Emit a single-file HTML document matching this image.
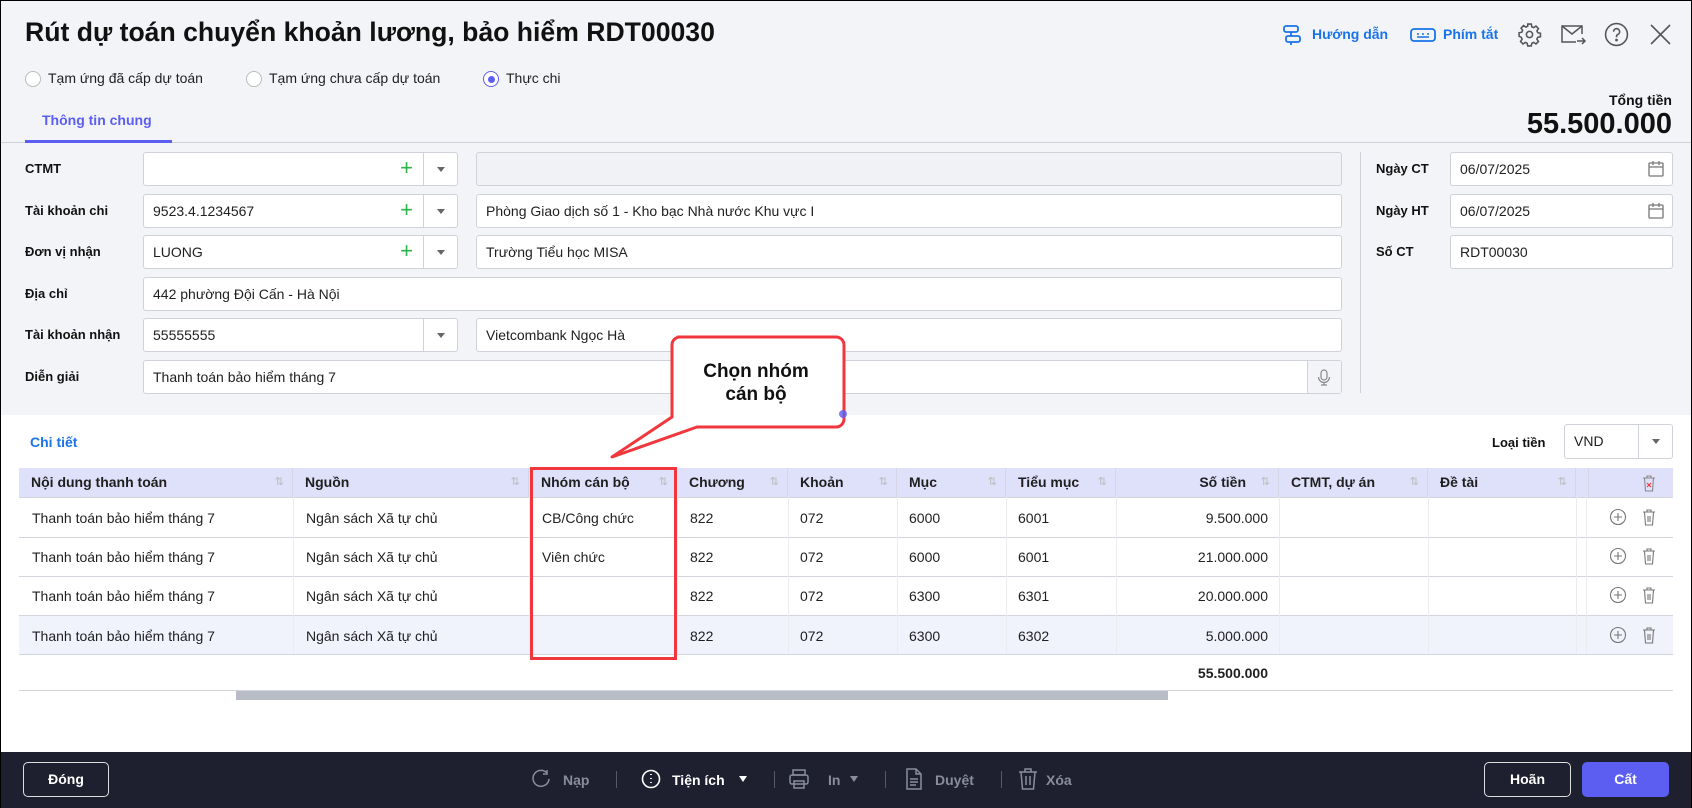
<!DOCTYPE html>
<html><head><meta charset="utf-8"><style>
*{box-sizing:border-box;margin:0;padding:0}
body{width:1692px;height:808px;position:relative;overflow:hidden;background:#fff;font-family:"Liberation Sans",Arial,sans-serif;color:#1f1f1f;font-size:14px}
.a{position:absolute}
.top{left:0;top:0;width:1692px;height:415px;background:#f3f4f8}
.lbl{position:absolute;font-weight:bold;font-size:13px;color:#111}
.inp{position:absolute;height:34px;background:#fff;border:1px solid #cfd2d8;border-radius:3px;padding-left:9px;line-height:32px;font-size:14px}
.dd{position:absolute;top:0;right:0;width:34px;height:32px;border-left:1px solid #cfd2d8}
.dd:after{content:"";position:absolute;left:13px;top:14px;border-left:4px solid transparent;border-right:4px solid transparent;border-top:5px solid #666}
.plus{position:absolute;right:44px;top:0;color:#2cb34a;font-size:22px;line-height:30px}
.th{position:absolute;top:468px;height:29px;line-height:29px;font-weight:bold;font-size:14px;padding-left:12px;border-right:1px solid #d6d6e6}
.sort{position:absolute;right:8px;top:0;color:#bbb;font-size:11px;font-weight:normal}
.td{position:absolute;font-size:14px;line-height:20px}
.hl{position:absolute;left:19px;width:1654px;height:1px;background:#d3d5dc}
.vl{position:absolute;width:1px;background:#ececf0}
.ft{position:absolute;top:752px;left:0;width:1692px;height:56px;background:#1e2030}
.tb{position:absolute;top:771px;line-height:18px;color:#8a8d99;font-size:14px;font-weight:bold}
.sep{position:absolute;top:771px;width:1px;height:17px;background:#555868}
</style></head><body>
<div class="a top"></div>
<div class="a" style="left:0;top:0;width:1692px;height:808px;border:1px solid #000;border-bottom:none;z-index:50;pointer-events:none"></div>

<div class="a" style="left:25px;top:17px;font-size:26.6px;font-weight:bold;color:#111">Rút dự toán chuyển khoản lương, bảo hiểm RDT00030</div>

<!-- header right -->
<svg class="a" style="left:1281px;top:24px" width="22" height="22" viewBox="0 0 22 22" fill="none" stroke="#1a73e8" stroke-width="1.8"><rect x="3" y="2" width="14" height="6" rx="2"/><rect x="5" y="12" width="14" height="6" rx="2"/><path d="M10 8v4"/><path d="M10 18v3"/></svg>
<div class="a" style="left:1312px;top:26px;color:#1a73e8;font-weight:bold;font-size:14px">Hướng dẫn</div>
<svg class="a" style="left:1410px;top:27px" width="26" height="16" viewBox="0 0 26 16" fill="none" stroke="#1a73e8" stroke-width="1.8"><rect x="1" y="2" width="24" height="12" rx="3"/><path d="M7 7h2M12 7h2M17 7h2M7 10h12" stroke-width="1.5"/></svg>
<div class="a" style="left:1443px;top:26px;color:#1a73e8;font-weight:bold;font-size:14px">Phím tắt</div>
<svg class="a" style="left:1517px;top:22px" width="25" height="25" viewBox="0 0 24 24" fill="none" stroke="#555" stroke-width="1.5"><circle cx="12" cy="12" r="3"/><path d="M10.3 2h3.4l.5 2.6 1.8.8 2.2-1.5 2.4 2.4-1.5 2.2.8 1.8 2.6.5v3.4l-2.6.5-.8 1.8 1.5 2.2-2.4 2.4-2.2-1.5-1.8.8-.5 2.6h-3.4l-.5-2.6-1.8-.8-2.2 1.5-2.4-2.4 1.5-2.2-.8-1.8L2 13.7v-3.4l2.6-.5.8-1.8-1.5-2.2 2.4-2.4 2.2 1.5 1.8-.8z"/></svg>
<svg class="a" style="left:1561px;top:23px" width="26" height="24" viewBox="0 0 26 24" fill="none" stroke="#555" stroke-width="1.5"><path d="M21 11V3H1v16h14"/><path d="M1 3l10 8 10-8"/><path d="M16 18h8M21 15l3 3-3 3"/></svg>
<svg class="a" style="left:1604px;top:22px" width="25" height="25" viewBox="0 0 24 24" fill="none" stroke="#555" stroke-width="1.5"><circle cx="12" cy="12" r="10.5"/><path d="M9.2 9.3a2.9 2.9 0 1 1 4 2.7c-.8.4-1.2 1-1.2 1.8v.8"/><circle cx="12" cy="17.3" r=".6" fill="#555"/></svg>
<svg class="a" style="left:1650px;top:24px" width="21" height="21" viewBox="0 0 21 21" stroke="#555" stroke-width="1.6"><path d="M1 1l19 19M20 1L1 20"/></svg>

<!-- radios -->
<div class="a" style="left:25px;top:71px;width:16px;height:16px;border:1px solid #bbb;border-radius:50%;background:#fff"></div>
<div class="a" style="left:48px;top:70px">Tạm ứng đã cấp dự toán</div>
<div class="a" style="left:246px;top:71px;width:16px;height:16px;border:1px solid #bbb;border-radius:50%;background:#fff"></div>
<div class="a" style="left:269px;top:70px">Tạm ứng chưa cấp dự toán</div>
<div class="a" style="left:483px;top:71px;width:16px;height:16px;border:1.5px solid #5b5ef0;border-radius:50%;background:#fff"></div>
<div class="a" style="left:487.5px;top:75.5px;width:7px;height:7px;border-radius:50%;background:#5b5ef0"></div>
<div class="a" style="left:506px;top:70px">Thực chi</div>

<div class="a" style="left:42px;top:112px;color:#5b5ef0;font-weight:bold;font-size:14px">Thông tin chung</div>
<div class="a" style="left:0;top:142px;width:1692px;height:1px;background:#cfd1d8"></div>
<div class="a" style="left:25px;top:140px;width:147px;height:3px;background:#5b5ef0"></div>

<div class="a" style="right:20px;top:92px;font-size:14px;font-weight:bold;color:#111">Tổng tiền</div>
<div class="a" style="right:20px;top:108px;font-size:29px;font-weight:bold;color:#111">55.500.000</div>

<!-- form -->
<div class="lbl" style="left:25px;top:161px">CTMT</div>
<div class="inp" style="left:143px;top:152px;width:315px"><span class="plus">+</span><span class="dd"></span></div>
<div class="inp" style="left:476px;top:152px;width:866px;background:#f1f2f5"></div>

<div class="lbl" style="left:25px;top:203px">Tài khoản chi</div>
<div class="inp" style="left:143px;top:194px;width:315px">9523.4.1234567<span class="plus">+</span><span class="dd"></span></div>
<div class="inp" style="left:476px;top:194px;width:866px">Phòng Giao dịch số 1 - Kho bạc Nhà nước Khu vực I</div>

<div class="lbl" style="left:25px;top:244px">Đơn vị nhận</div>
<div class="inp" style="left:143px;top:235px;width:315px">LUONG<span class="plus">+</span><span class="dd"></span></div>
<div class="inp" style="left:476px;top:235px;width:866px">Trường Tiểu học MISA</div>

<div class="lbl" style="left:25px;top:286px">Địa chỉ</div>
<div class="inp" style="left:143px;top:277px;width:1199px">442 phường Đội Cấn - Hà Nội</div>

<div class="lbl" style="left:25px;top:327px">Tài khoản nhận</div>
<div class="inp" style="left:143px;top:318px;width:315px">55555555<span class="dd"></span></div>
<div class="inp" style="left:476px;top:318px;width:866px">Vietcombank Ngọc Hà</div>

<div class="lbl" style="left:25px;top:369px">Diễn giải</div>
<div class="inp" style="left:143px;top:360px;width:1199px">Thanh toán bảo hiểm tháng 7
<span class="a" style="right:0;top:0;width:34px;height:32px;border-left:1px solid #cfd2d8;background:#f3f4f8"></span>
<svg class="a" style="right:10px;top:8px" width="14" height="17" viewBox="0 0 14 17" fill="none" stroke="#888" stroke-width="1.2"><rect x="4" y="1" width="6" height="10" rx="3"/><path d="M1.5 8a5.5 5.5 0 0 0 11 0M7 13.5V16M4 16h6"/></svg></div>

<div class="a" style="left:1360px;top:152px;width:1px;height:241px;background:#cfd1d8"></div>
<div class="lbl" style="left:1376px;top:161px">Ngày CT</div>
<div class="inp" style="left:1450px;top:152px;width:223px">06/07/2025</div>
<div class="lbl" style="left:1376px;top:203px">Ngày HT</div>
<div class="inp" style="left:1450px;top:194px;width:223px">06/07/2025</div>
<div class="lbl" style="left:1376px;top:244px">Số CT</div>
<div class="inp" style="left:1450px;top:235px;width:223px">RDT00030</div>
<svg class="a" style="left:1647px;top:160px" width="18" height="18" viewBox="0 0 18 18" fill="none" stroke="#777" stroke-width="1.3"><rect x="2" y="3" width="14" height="13" rx="1"/><path d="M2 7h14M6 1v4M12 1v4"/></svg>
<svg class="a" style="left:1647px;top:202px" width="18" height="18" viewBox="0 0 18 18" fill="none" stroke="#777" stroke-width="1.3"><rect x="2" y="3" width="14" height="13" rx="1"/><path d="M2 7h14M6 1v4M12 1v4"/></svg>

<!-- detail -->
<div class="a" style="left:30px;top:434px;color:#1a73e8;font-weight:bold;font-size:14px">Chi tiết</div>
<div class="lbl" style="left:1492px;top:435px;font-size:13px">Loại tiền</div>
<div class="inp" style="left:1564px;top:424px;width:109px;height:35px">VND<span class="dd" style="height:33px"></span></div>

<div class="a" style="left:19px;top:468px;width:1654px;height:29px;background:#dfe0fa"></div>
<div class="a" style="left:19px;top:615px;width:1654px;height:39px;background:#f0f2fc"></div>
<div class="th" style="left:19px;width:274px">Nội dung thanh toán<span class="sort">⇅</span></div>
<div class="th" style="left:293px;width:236px">Nguồn<span class="sort">⇅</span></div>
<div class="th" style="left:529px;width:148px">Nhóm cán bộ<span class="sort">⇅</span></div>
<div class="th" style="left:677px;width:111px">Chương<span class="sort">⇅</span></div>
<div class="th" style="left:788px;width:109px">Khoản<span class="sort">⇅</span></div>
<div class="th" style="left:897px;width:109px">Mục<span class="sort">⇅</span></div>
<div class="th" style="left:1006px;width:110px">Tiểu mục<span class="sort">⇅</span></div>
<div class="th" style="left:1116px;width:163px;text-align:right;padding-right:32px">Số tiền<span class="sort">⇅</span></div>
<div class="th" style="left:1279px;width:149px">CTMT, dự án<span class="sort">⇅</span></div>
<div class="th" style="left:1428px;width:148px">Đề tài<span class="sort">⇅</span></div>
<div class="th" style="left:1576px;width:10px"></div>
<svg class="a" style="left:1642px;top:474px" width="14" height="18" viewBox="0 0 14 18" fill="none" stroke="#888" stroke-width="1.1"><path d="M1 4h12M5 4V2h4v2M2.5 4l1 13h7l1-13"/><path d="M5 9l4 4M9 9l-4 4" stroke="#e33"/></svg>

<div class="hl" style="top:497px"></div><div class="hl" style="top:537px"></div><div class="hl" style="top:576px"></div><div class="hl" style="top:615px"></div><div class="hl" style="top:654px"></div><div class="hl" style="top:690px"></div>
<div class="vl" style="left:293px;top:497px;height:157px"></div><div class="vl" style="left:529px;top:497px;height:157px"></div><div class="vl" style="left:677px;top:497px;height:157px"></div><div class="vl" style="left:788px;top:497px;height:157px"></div><div class="vl" style="left:897px;top:497px;height:157px"></div><div class="vl" style="left:1006px;top:497px;height:157px"></div><div class="vl" style="left:1116px;top:497px;height:157px"></div><div class="vl" style="left:1279px;top:497px;height:157px"></div><div class="vl" style="left:1428px;top:497px;height:157px"></div><div class="vl" style="left:1576px;top:497px;height:157px"></div><div class="vl" style="left:1586px;top:497px;height:157px"></div>

<div class="td" style="left:32px;top:508px">Thanh toán bảo hiểm tháng 7</div><div class="td" style="left:306px;top:508px">Ngân sách Xã tự chủ</div><div class="td" style="left:542px;top:508px">CB/Công chức</div><div class="td" style="left:690px;top:508px">822</div><div class="td" style="left:800px;top:508px">072</div><div class="td" style="left:909px;top:508px">6000</div><div class="td" style="left:1018px;top:508px">6001</div><div class="td" style="left:1116px;width:152px;text-align:right;top:508px">9.500.000</div>
<div class="td" style="left:32px;top:547px">Thanh toán bảo hiểm tháng 7</div><div class="td" style="left:306px;top:547px">Ngân sách Xã tự chủ</div><div class="td" style="left:542px;top:547px">Viên chức</div><div class="td" style="left:690px;top:547px">822</div><div class="td" style="left:800px;top:547px">072</div><div class="td" style="left:909px;top:547px">6000</div><div class="td" style="left:1018px;top:547px">6001</div><div class="td" style="left:1116px;width:152px;text-align:right;top:547px">21.000.000</div>
<div class="td" style="left:32px;top:586px">Thanh toán bảo hiểm tháng 7</div><div class="td" style="left:306px;top:586px">Ngân sách Xã tự chủ</div><div class="td" style="left:690px;top:586px">822</div><div class="td" style="left:800px;top:586px">072</div><div class="td" style="left:909px;top:586px">6300</div><div class="td" style="left:1018px;top:586px">6301</div><div class="td" style="left:1116px;width:152px;text-align:right;top:586px">20.000.000</div>
<div class="td" style="left:32px;top:626px">Thanh toán bảo hiểm tháng 7</div><div class="td" style="left:306px;top:626px">Ngân sách Xã tự chủ</div><div class="td" style="left:690px;top:626px">822</div><div class="td" style="left:800px;top:626px">072</div><div class="td" style="left:909px;top:626px">6300</div><div class="td" style="left:1018px;top:626px">6302</div><div class="td" style="left:1116px;width:152px;text-align:right;top:626px">5.000.000</div>
<div class="td" style="left:1116px;width:152px;text-align:right;top:663px;font-weight:bold">55.500.000</div>

<svg class="a" style="left:1610px;top:508px" width="52" height="18" viewBox="0 0 52 18" fill="none" stroke="#777" stroke-width="1.1"><circle cx="8" cy="9" r="7.5"/><path d="M8 5v8M4 9h8"/><path d="M33 4h12M37 4V2h4v2M34.5 4l1 13h7l1-13M38 8v6M40 8v6"/></svg>
<svg class="a" style="left:1610px;top:547px" width="52" height="18" viewBox="0 0 52 18" fill="none" stroke="#777" stroke-width="1.1"><circle cx="8" cy="9" r="7.5"/><path d="M8 5v8M4 9h8"/><path d="M33 4h12M37 4V2h4v2M34.5 4l1 13h7l1-13M38 8v6M40 8v6"/></svg>
<svg class="a" style="left:1610px;top:586px" width="52" height="18" viewBox="0 0 52 18" fill="none" stroke="#777" stroke-width="1.1"><circle cx="8" cy="9" r="7.5"/><path d="M8 5v8M4 9h8"/><path d="M33 4h12M37 4V2h4v2M34.5 4l1 13h7l1-13M38 8v6M40 8v6"/></svg>
<svg class="a" style="left:1610px;top:626px" width="52" height="18" viewBox="0 0 52 18" fill="none" stroke="#777" stroke-width="1.1"><circle cx="8" cy="9" r="7.5"/><path d="M8 5v8M4 9h8"/><path d="M33 4h12M37 4V2h4v2M34.5 4l1 13h7l1-13M38 8v6M40 8v6"/></svg>

<div class="a" style="left:236px;top:691px;width:932px;height:9px;background:#b8bcc6"></div>

<!-- red box & callout -->
<div class="a" style="left:530px;top:467px;width:147px;height:193px;border:3px solid #f0373d"></div>
<svg class="a" style="left:600px;top:330px" width="260" height="135" viewBox="0 0 260 135"><path d="M78 7h158a8 8 0 0 1 8 8v74a8 8 0 0 1-8 8H97l-85 30 60-40V15a8 8 0 0 1 8-8z" fill="#fff" stroke="#f0373d" stroke-width="3" stroke-linejoin="round"/><circle cx="243" cy="84" r="4" fill="#5b5ef0" opacity=".8"/></svg>
<div class="a" style="left:670px;top:360px;width:172px;text-align:center;font-weight:bold;font-size:19px;line-height:23px;color:#111">Chọn nhóm<br>cán bộ</div>

<!-- footer -->
<div class="ft"></div>
<div class="a" style="left:23px;top:762px;width:86px;height:35px;border:1px solid #ddd;border-radius:5px;color:#fff;font-weight:bold;text-align:center;line-height:33px">Đóng</div>
<svg class="a" style="left:531px;top:769px" width="20" height="20" viewBox="0 0 20 20" fill="none" stroke="#8a8d99" stroke-width="1.5"><path d="M16 4a8 8 0 1 0 2 6"/><path d="M16 1v4h-4"/></svg>
<div class="tb" style="left:563px">Nạp</div>
<div class="sep" style="left:616px"></div>
<svg class="a" style="left:641px;top:769px" width="20" height="20" viewBox="0 0 20 20" fill="none" stroke="#fff" stroke-width="1.6"><circle cx="10" cy="10" r="8.5"/><path d="M10 5v1M10 9v1M10 13v1" stroke-width="1.8"/></svg>
<div class="tb" style="left:672px;color:#fff">Tiện ích</div>
<div class="a" style="left:739px;top:776px;border-left:4px solid transparent;border-right:4px solid transparent;border-top:6px solid #fff"></div>
<div class="sep" style="left:774px"></div>
<svg class="a" style="left:788px;top:768px" width="22" height="22" viewBox="0 0 22 22" fill="none" stroke="#8a8d99" stroke-width="1.5"><rect x="5" y="2" width="12" height="5"/><rect x="2" y="7" width="18" height="9" rx="2"/><rect x="6" y="13" width="10" height="7"/></svg>
<div class="tb" style="left:828px">In</div>
<div class="a" style="left:850px;top:776px;border-left:4px solid transparent;border-right:4px solid transparent;border-top:6px solid #8a8d99"></div>
<div class="sep" style="left:885px"></div>
<svg class="a" style="left:905px;top:768px" width="18" height="22" viewBox="0 0 18 22" fill="none" stroke="#8a8d99" stroke-width="1.5"><path d="M2 1h9l5 5v15H2z"/><path d="M11 1v5h5M5 11h8M5 14h8M5 17h6"/></svg>
<div class="tb" style="left:935px">Duyệt</div>
<div class="sep" style="left:1001px"></div>
<svg class="a" style="left:1018px;top:767px" width="20" height="23" viewBox="0 0 20 23" fill="none" stroke="#8a8d99" stroke-width="1.5"><path d="M1 5h18M7 5V2h6v3M3 5l1.5 17h11L17 5M8 9v9M12 9v9"/></svg>
<div class="tb" style="left:1046px">Xóa</div>
<div class="a" style="left:1484px;top:762px;width:87px;height:35px;border:1px solid #ddd;border-radius:5px;color:#fff;font-weight:bold;text-align:center;line-height:33px">Hoãn</div>
<div class="a" style="left:1582px;top:762px;width:87px;height:35px;background:#5b5ef0;border-radius:5px;color:#fff;font-weight:bold;text-align:center;line-height:35px">Cất</div>
</body></html>
